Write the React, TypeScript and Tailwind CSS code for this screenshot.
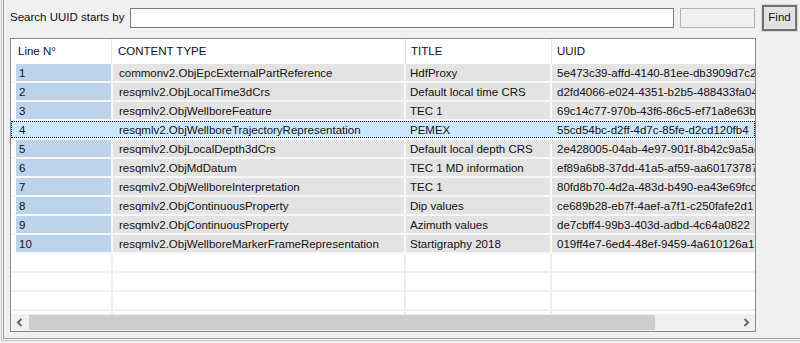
import React from 'react';

type Row = { n: number; type: string; title: string; uuid: string };

const rows: Row[] = [
  { n: 1, type: 'commonv2.ObjEpcExternalPartReference', title: 'HdfProxy', uuid: '5e473c39-affd-4140-81ee-db3909d7c2' },
  { n: 2, type: 'resqmlv2.ObjLocalTime3dCrs', title: 'Default local time CRS', uuid: 'd2fd4066-e024-4351-b2b5-488433fa04' },
  { n: 3, type: 'resqmlv2.ObjWellboreFeature', title: 'TEC 1', uuid: '69c14c77-970b-43f6-86c5-ef71a8e63b' },
  { n: 4, type: 'resqmlv2.ObjWellboreTrajectoryRepresentation', title: 'PEMEX', uuid: '55cd54bc-d2ff-4d7c-85fe-d2cd120fb4' },
  { n: 5, type: 'resqmlv2.ObjLocalDepth3dCrs', title: 'Default local depth CRS', uuid: '2e428005-04ab-4e97-901f-8b42c9a5ac' },
  { n: 6, type: 'resqmlv2.ObjMdDatum', title: 'TEC 1 MD information', uuid: 'ef89a6b8-37dd-41a5-af59-aa60173787' },
  { n: 7, type: 'resqmlv2.ObjWellboreInterpretation', title: 'TEC 1', uuid: '80fd8b70-4d2a-483d-b490-ea43e69fcc' },
  { n: 8, type: 'resqmlv2.ObjContinuousProperty', title: 'Dip values', uuid: 'ce689b28-eb7f-4aef-a7f1-c250fafe2d1' },
  { n: 9, type: 'resqmlv2.ObjContinuousProperty', title: 'Azimuth values', uuid: 'de7cbff4-99b3-403d-adbd-4c64a0822' },
  { n: 10, type: 'resqmlv2.ObjWellboreMarkerFrameRepresentation', title: 'Startigraphy 2018', uuid: '019ff4e7-6ed4-48ef-9459-4a610126a1a' },
];

const SELECTED = 4;

const Chevron = ({ dir }: { dir: 'left' | 'right' }) => (
  <svg width="7" height="9" viewBox="0 0 7 9">
    <path
      d={dir === 'left' ? 'M5.5 1 L1.8 4.5 L5.5 8' : 'M1.5 1 L5.2 4.5 L1.5 8'}
      fill="none"
      stroke="#606060"
      strokeWidth="1.8"
    />
  </svg>
);

const DataRow = ({ row }: { row: Row }) => {
  const sel = row.n === SELECTED;
  const first = sel ? 'bg-[#cce8ff]' : 'bg-[#bcd3ec]';
  const other = sel ? 'bg-[#cce8ff]' : 'bg-[#e3e3e3]';
  const sep = sel ? 'bg-[#cce8ff]' : 'bg-[#f7f9fc]';
  return (
    <div className="h-[19px] border-b-2 border-[#f7f7f7]">
      <div
        className={`flex h-[17px] leading-[18px] whitespace-nowrap ${
          sel ? 'bg-[#cce8ff] outline-1 outline-dotted outline-black -outline-offset-1' : ''
        }`}
      >
        <div className={`w-[5px] ${sel ? 'bg-[#cce8ff]' : 'bg-white'}`} />
        <div className={`w-[95px] pl-[3px] ${first}`}>{row.n}</div>
        <div className={`w-[2px] ${sep}`} />
        <div className={`w-[291px] pl-[6px] overflow-hidden ${other}`}>{row.type}</div>
        <div className={`w-[2px] ${sep}`} />
        <div className={`w-[144px] pl-[4px] overflow-hidden ${other}`}>{row.title}</div>
        <div className={`w-[2px] ${sep}`} />
        <div className={`flex-1 pl-[5px] overflow-hidden ${other}`}>{row.uuid}</div>
      </div>
    </div>
  );
};

const EmptyRow = () => (
  <div className="h-[19px] border-b-2 border-[#f0f0f0]">
    <div className="flex h-[17px]">
      <div className="w-[100px] bg-white" />
      <div className="w-[2px] bg-[#e8eef7]" />
      <div className="w-[291px] bg-white" />
      <div className="w-[2px] bg-[#e8eef7]" />
      <div className="w-[144px] bg-white" />
      <div className="w-[2px] bg-[#e8eef7]" />
      <div className="flex-1 bg-white" />
    </div>
  </div>
);

export default function App() {
  return (
    <div className="w-[800px] h-[343px] bg-[#f0f0f0] overflow-hidden font-['Liberation_Sans',Arial,sans-serif] text-[11.5px] text-[#111]">
      <div className="ml-[1px] h-[341px] border-l border-b border-[#c8c8c8]">
        <div className="ml-[1px] h-[339px] border-l border-b border-[#a0a0a0] pl-[6px]">
          {/* Search bar */}
          <div className="flex items-center h-[36px]">
            <span className="w-[120px] leading-none">Search UUID starts by</span>
            <input className="w-[544px] h-[20px] bg-white border border-[#7a7a7a] outline-none px-1 text-[12px]" />
            <div className="ml-[6px] w-[75px] h-[20px] bg-[#f0f0f0] border border-[#b4b4b4]" />
            <div className="ml-[6px] w-[37px] h-[28px] border border-[#dadada]">
              <button className="w-full h-full border-2 border-[#707070] bg-[#e1e1e1] leading-none">Find</button>
            </div>
          </div>

          {/* Table */}
          <div className="mt-[2px] w-[746px] h-[294px] border border-[#828790] bg-white flex flex-col">
            <div className="flex h-[25px] items-center whitespace-nowrap">
              <div className="w-[100px] pl-[7px]">Line N°</div>
              <div className="w-[1px] h-full bg-[#e5e5e5]" />
              <div className="w-[293px] pl-[6px]">CONTENT TYPE</div>
              <div className="w-[1px] h-full bg-[#e5e5e5]" />
              <div className="w-[145px] pl-[5px]">TITLE</div>
              <div className="w-[1px] h-full bg-[#e5e5e5]" />
              <div className="flex-1 pl-[5px]">UUID</div>
            </div>
            <div className="h-[250px] overflow-hidden">
              {rows.map((r) => (
                <DataRow key={r.n} row={r} />
              ))}
              <EmptyRow />
              <EmptyRow />
              <EmptyRow />
              <EmptyRow />
            </div>
            <div className="flex h-[17px] bg-[#f0f0f0] items-center">
              <div className="w-[17px] h-full flex items-center justify-center">
                <Chevron dir="left" />
              </div>
              <div className="ml-[1px] w-[626px] h-[15px] bg-[#cdcdcd]" />
              <div className="flex-1" />
              <div className="w-[17px] h-full flex items-center justify-center">
                <Chevron dir="right" />
              </div>
            </div>
          </div>
        </div>
      </div>
    </div>
  );
}
